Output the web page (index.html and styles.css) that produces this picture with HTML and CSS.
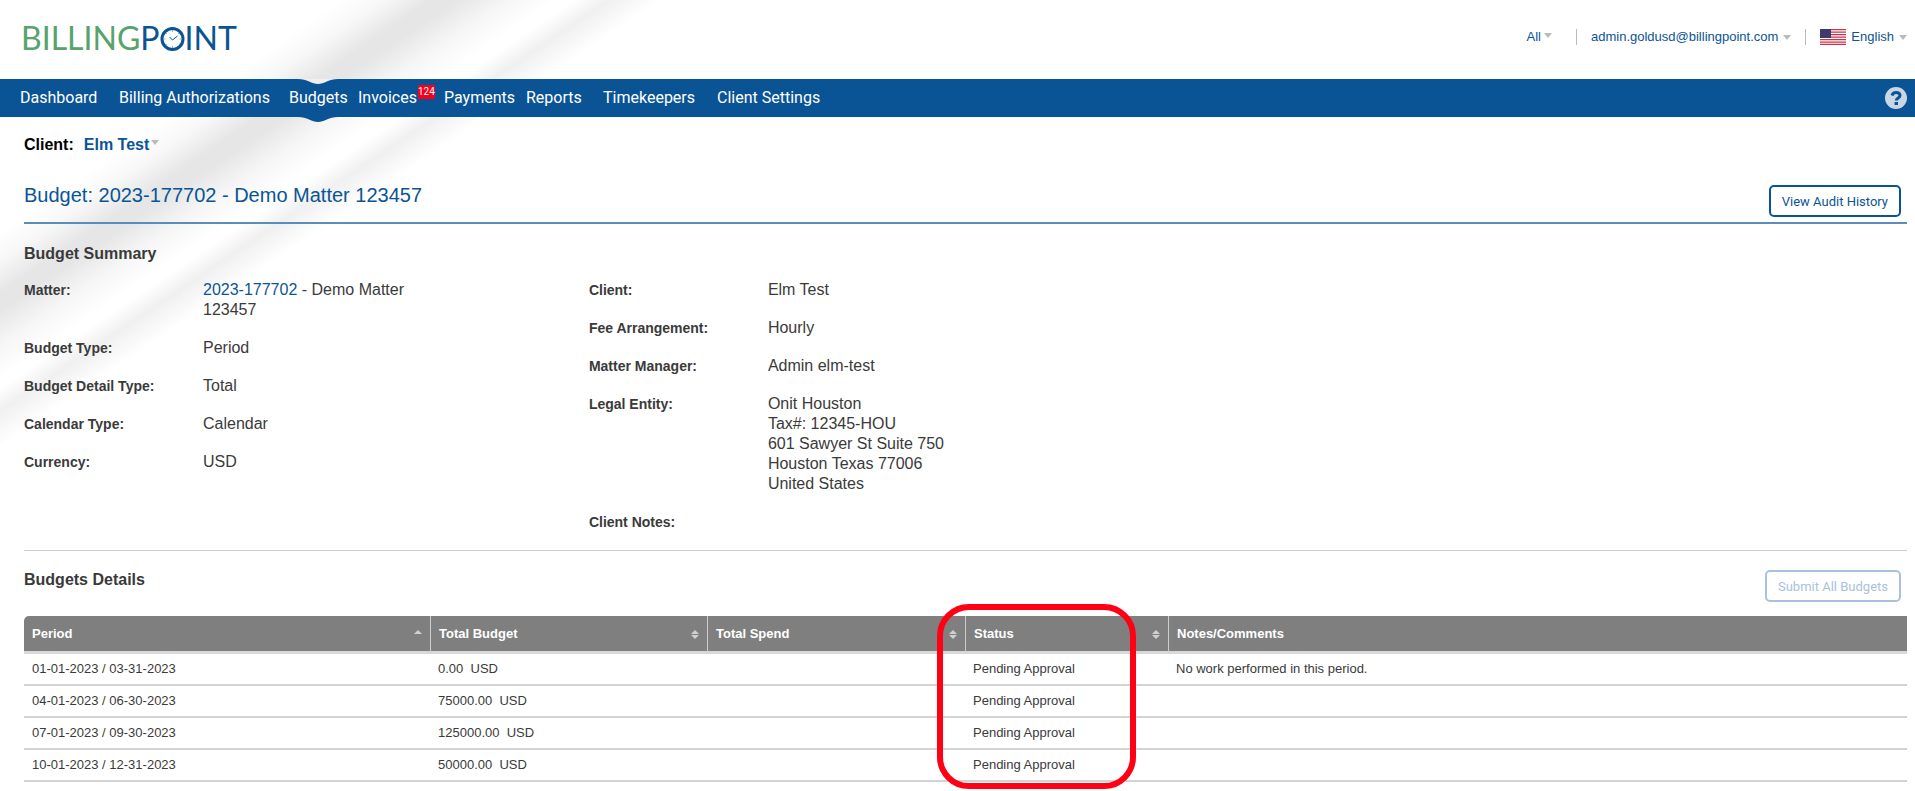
FILE: index.html
```html
<!doctype html>
<html lang="en">
  <head>
    <title>BillingPoint - Budget</title>
    <meta charset="utf-8">
    <meta name="viewport" content="width=device-width, initial-scale=1">
    <link rel="stylesheet" href="styles.css">
  </head>

  <body>
    <svg class="swoosh" width="760" height="500" viewBox="0 0 760 500" aria-hidden="true">
      <defs>
        <linearGradient id="wide" gradientUnits="userSpaceOnUse" x1="191" y1="102" x2="259" y2="202">
          <stop offset="0" stop-color="#e6e6e6" stop-opacity="0"/>
          <stop offset=".2" stop-color="#e6e6e6" stop-opacity=".3"/>
          <stop offset=".42" stop-color="#e6e6e6"/>
          <stop offset=".54" stop-color="#e6e6e6"/>
          <stop offset=".78" stop-color="#e6e6e6" stop-opacity=".35"/>
          <stop offset="1" stop-color="#e6e6e6" stop-opacity="0"/>
        </linearGradient>
        <linearGradient id="thin" gradientUnits="userSpaceOnUse" x1="296" y1="188" x2="323" y2="228">
          <stop offset="0" stop-color="#f0f0f0" stop-opacity="0"/>
          <stop offset=".4" stop-color="#f0f0f0"/>
          <stop offset="1" stop-color="#f0f0f0" stop-opacity="0"/>
        </linearGradient>
      </defs>
      <rect width="760" height="500" fill="url(#wide)"/>
      <rect width="760" height="500" fill="url(#thin)"/>
    </svg>

    <header class="top">
      <a class="logo" href="#" aria-label="BillingPoint">
        <span class="logo-billing">BILLING</span><span class="logo-point">P<svg width="25" height="24" viewBox="0 0 25 24"><circle cx="12.500" cy="12" r="10.500" fill="#fff" stroke="#0a5496" stroke-width="3"/><path d="M12.500 3v2M12.500 19v2M3.500 12h2M19.500 12h2M6 6l1 1M18 18l1 1M19 6l-1 1M6 18l1-1" stroke="#8fb0d0"/><path d="M9.500 10l3 3 5-4" fill="none" stroke="#0a5496"/></svg>INT</span>
      </a>
      <div class="account">
        <a class="all" href="#">All<i class="caret"></i></a>
        <a class="user" href="#">admin.goldusd@billingpoint.com<i class="caret"></i></a>
        <a class="lang" href="#">
          <svg width="26" height="16" viewBox="0 0 26 16">
            <path fill="#fff" d="M0 0h26v16H0z"/>
            <path stroke="#c8324b" stroke-width="1.3" d="M0 .6h26M0 3.100h26M0 5.600h26M0 8.100h26M0 10.600h26M0 13.100h26M0 15.400h26"/>
            <path fill="#3c3b6e" d="M0 0h11v9H0z"/>
          </svg>
          English<i class="caret"></i>
        </a>
      </div>
    </header>

    <nav class="menu">
      <a href="#">Dashboard</a>
      <a href="#">Billing Authorizations</a>
      <a href="#" class="active">Budgets
        <svg class="notch" width="40" height="6" viewBox="0 0 40 6"><path fill="#efefef" d="M0 0h40c-9 0-14 5-20 5S9 0 0 0z"/></svg>
        <svg class="bump" width="40" height="6" viewBox="0 0 40 6"><path fill="#0a5496" d="M0 0h40c-9 0-14 5-20 5S9 0 0 0z"/></svg>
      </a>
      <a href="#">Invoices<span class="badge">124</span></a>
      <a href="#">Payments</a>
      <a href="#">Reports</a>
      <a href="#">Timekeepers</a>
      <a href="#">Client Settings</a>
      <a href="#" class="help" aria-label="Help">
        <svg width="24" height="24" viewBox="0 0 24 24">
          <circle cx="12" cy="12" r="11" fill="#c9d6e6"/>
          <path d="M8 9.500c.6-2 2-3 4-3 2.300 0 4 1.100 4 3 0 2.500-3.700 2.500-3.700 5" fill="none" stroke="#0a5496" stroke-width="3"/>
          <path d="M10.600 16h3.400v3h-3.400z" fill="#0a5496"/>
        </svg>
      </a>
    </nav>

    <main>
      <div class="client">
        <span>Client:</span>
        <a href="#">Elm Test<i class="caret"></i></a>
      </div>

      <div class="title">
        <h1>Budget: 2023-177702 - Demo Matter 123457</h1>
        <button type="button">View Audit History</button>
      </div>

      <section class="summary">
        <h2>Budget Summary</h2>
        <div class="columns">
          <dl>
            <dt>Matter:</dt><dd><a href="#">2023-177702</a> - Demo Matter 123457</dd>
            <dt>Budget Type:</dt><dd>Period</dd>
            <dt>Budget Detail Type:</dt><dd>Total</dd>
            <dt>Calendar Type:</dt><dd>Calendar</dd>
            <dt>Currency:</dt><dd>USD</dd>
          </dl>
          <dl>
            <dt>Client:</dt><dd>Elm Test</dd>
            <dt>Fee Arrangement:</dt><dd>Hourly</dd>
            <dt>Matter Manager:</dt><dd>Admin elm-test</dd>
            <dt>Legal Entity:</dt>
            <dd>Onit Houston<br>Tax#: 12345-HOU<br>601 Sawyer St Suite 750<br>Houston Texas 77006<br>United States</dd>
            <dt>Client Notes:</dt><dd></dd>
          </dl>
        </div>
      </section>

      <section>
        <div class="details-head">
          <h2>Budgets Details</h2>
          <button type="button" disabled>Submit All Budgets</button>
        </div>
        <div class="table-wrap">
          <table>
            <thead>
              <tr>
                <th class="period">Period<i class="sort asc"></i></th>
                <th class="budget">Total Budget<i class="sort"></i></th>
                <th class="spend">Total Spend<i class="sort"></i></th>
                <th class="status">Status<i class="sort"></i></th>
                <th>Notes/Comments</th>
              </tr>
            </thead>
            <tbody>
              <tr><td>01-01-2023 / 03-31-2023</td><td>0.00&nbsp; USD</td><td></td><td>Pending Approval</td><td>No work performed in this period.</td></tr>
              <tr><td>04-01-2023 / 06-30-2023</td><td>75000.00&nbsp; USD</td><td></td><td>Pending Approval</td><td></td></tr>
              <tr><td>07-01-2023 / 09-30-2023</td><td>125000.00&nbsp; USD</td><td></td><td>Pending Approval</td><td></td></tr>
              <tr><td>10-01-2023 / 12-31-2023</td><td>50000.00&nbsp; USD</td><td></td><td>Pending Approval</td><td></td></tr>
            </tbody>
          </table>
          <div class="highlight"></div>
        </div>
      </section>
    </main>
  </body>
</html>
```
FILE: styles.css
```css
* {
  box-sizing: border-box;
}
body {
  margin: 0;
  font-family: "Liberation Sans", Arial, sans-serif;
  font-size: 16px;
  line-height: 20px;
  color: #3a3a3a;
  background: #fff;
}
a {
  color: #0a5496;
  text-decoration: none;
}
h1, h2, dl, dd {
  margin: 0;
}
.swoosh {
  position: absolute;
  top: 0;
  left: 0;
  z-index: -1;
}
.caret {
  display: inline-block;
  border: 4px solid transparent;
  border-top: 5px solid #bbb;
  border-bottom: 0;
}

/* header */
.top {
  display: flex;
  justify-content: space-between;
  height: 79px;
  padding: 0 8px 0 21px;
}
.logo {
  display: flex;
  align-items: flex-start;
  font: 32px/76px Lato, sans-serif;
}
.logo-billing {
  color: #56a36c;
}
.logo svg {
  vertical-align: -1px;
}
.account {
  display: flex;
  align-items: flex-start;
  padding-top: 29px;
  font-size: 13px;
  line-height: 16px;
}
.account a {
  display: flex;
  align-items: center;
}
.account .caret {
  margin-left: 5px;
}
.account .all .caret {
  margin: 0 24px 4px 3px;
}
.user, .lang {
  border-left: 1px solid #bbb;
  padding-left: 14px;
}
.user {
  padding-right: 14px;
}
.lang svg {
  margin-right: 5px;
}

/* menu */
.menu {
  display: grid;
  grid-template-columns: 99px 170px 69px 86px 82px 77px 114px 1fr auto;
  align-items: center;
  height: 38px;
  padding: 0 7px 0 20px;
  background: #0a5496;
  font: 16px/38px Roboto, sans-serif;
}
.menu a {
  color: #fff;
  white-space: nowrap;
}
.menu .active {
  position: relative;
}
.notch, .bump {
  position: absolute;
  left: 9px;
}
.notch {
  top: 0;
}
.bump {
  top: 100%;
}
.badge {
  display: inline-block;
  margin-left: 1px;
  border-radius: 1px;
  background: #f8001c;
  font-size: 10px;
  line-height: 14px;
  vertical-align: 8px;
}
.menu .help {
  display: flex;
}

main {
  padding: 0 8px 8px 24px;
}
.client {
  display: flex;
  gap: 10px;
  padding-top: 18px;
  font-weight: bold;
}
.client span {
  color: #000;
}
.client .caret {
  margin-left: 2px;
  vertical-align: 5px;
}
.title {
  display: flex;
  justify-content: space-between;
  align-items: flex-start;
  margin-top: 30px;
  padding: 0 6px 5px 0;
  border-bottom: 2px solid #5b8cbc;
}
h1 {
  font-size: 20px;
  line-height: 20px;
  font-weight: normal;
  color: #0a5496;
}
button {
  height: 32px;
  padding: 0 11px;
  border: 2px solid #0a5496;
  border-radius: 5px;
  background: #fff;
  color: #0a5496;
  font: 13px Roboto, sans-serif;
}
button:disabled {
  border-color: #a9c1de;
  color: #a9c1de;
}
h2 {
  font-size: 16px;
  line-height: 20px;
}

/* summary */
.summary {
  padding: 20px 0 18px;
  border-bottom: 1px solid #ccc;
}
.columns {
  display: grid;
  grid-template-columns: 30% 30%;
  margin-top: 16px;
}
dl {
  display: grid;
  grid-template-columns: 179px 240px;
  align-content: start;
  row-gap: 18px;
}
dt {
  font-size: 14px;
  font-weight: bold;
}

/* details */
.details-head {
  display: flex;
  justify-content: space-between;
  align-items: flex-start;
  padding: 19px 6px 14px 0;
}
.table-wrap {
  position: relative;
}
table {
  width: 100%;
  table-layout: fixed;
  border-collapse: separate;
  border-spacing: 0;
  font-size: 13px;
}
th, td {
  text-align: left;
  padding: 0 8px;
}
th {
  position: relative;
  height: 38px;
  background: #7f7f7f;
  background-clip: padding-box;
  border-left: 1px solid #ccc;
  border-bottom: 3px solid #d8d8d8;
  color: #fff;
}
th:first-child {
  border-left: 0;
  border-top-left-radius: 5px;
}
td {
  height: 32px;
  border-bottom: 2px solid #d3d3d3;
}
.period {
  width: 406px;
}
.budget {
  width: 277px;
}
.spend {
  width: 258px;
}
.status {
  width: 203px;
}
.sort {
  position: absolute;
  top: 14px;
  right: 8px;
}
.sort::before, .sort::after {
  content: "";
  display: block;
  border: 4px solid transparent;
}
.sort::before {
  border-top: 0;
  border-bottom: 4px solid #d0d0d0;
}
.sort::after {
  margin-top: 1px;
  border-bottom: 0;
  border-top: 4px solid #d0d0d0;
}
.sort.asc::after {
  display: none;
}
.highlight {
  position: absolute;
  top: -12px;
  bottom: -7px;
  left: 913px;
  width: 199px;
  border: 6px solid #ff0014;
  border-radius: 32px;
}
```
